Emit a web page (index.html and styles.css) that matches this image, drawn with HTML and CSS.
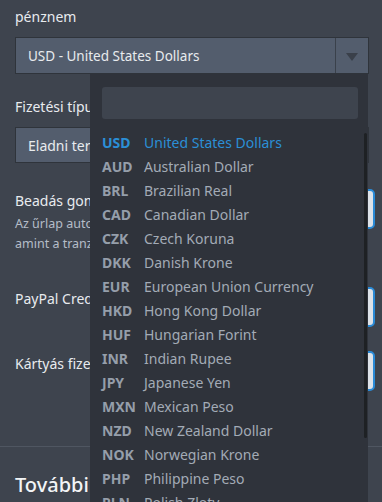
FILE: index.html
```html
<!DOCTYPE html>
<html lang="hu">
<head>
<meta charset="utf-8">
<title>Pénznem</title>
<link rel="stylesheet" href="styles.css">
</head>
<body>
<div class="page">
  <div class="label first">pénznem</div>
  <div class="select">
    <span class="select-text">USD - United States Dollars</span>
    <span class="select-arrow"><span class="tri"></span></span>
  </div>

  <div class="label second">Fizetési típus</div>
  <div class="box">Eladni termékeket</div>

  <div class="row r1">
    <div class="row-text">
      <div class="row-label">Beadás gomb szövege</div>
      <div class="row-desc">
        <span class="desc-line">Az űrlap automatikusan elküldésre kerül,</span>
        <span class="desc-line">amint a tranzakció befejeződött.</span>
      </div>
    </div>
    <div class="toggle"></div>
  </div>

  <div class="row r2">
    <div class="row-text">
      <div class="row-label">PayPal Credit</div>
    </div>
    <div class="toggle"></div>
  </div>

  <div class="row r3">
    <div class="row-text">
      <div class="row-label">Kártyás fizetés</div>
    </div>
    <div class="toggle"></div>
  </div>

  <hr class="sep">
  <h2 class="section-title">További beállítások</h2>
</div>

<div class="dropdown">
  <div class="search"></div>
  <ul class="list">
    <li class="opt selected"><span class="code">USD</span><span class="name">United States Dollars</span></li>
    <li class="opt"><span class="code">AUD</span><span class="name">Australian Dollar</span></li>
    <li class="opt"><span class="code">BRL</span><span class="name">Brazilian Real</span></li>
    <li class="opt"><span class="code">CAD</span><span class="name">Canadian Dollar</span></li>
    <li class="opt"><span class="code">CZK</span><span class="name">Czech Koruna</span></li>
    <li class="opt"><span class="code">DKK</span><span class="name">Danish Krone</span></li>
    <li class="opt"><span class="code">EUR</span><span class="name">European Union Currency</span></li>
    <li class="opt"><span class="code">HKD</span><span class="name">Hong Kong Dollar</span></li>
    <li class="opt"><span class="code">HUF</span><span class="name">Hungarian Forint</span></li>
    <li class="opt"><span class="code">INR</span><span class="name">Indian Rupee</span></li>
    <li class="opt"><span class="code">JPY</span><span class="name">Japanese Yen</span></li>
    <li class="opt"><span class="code">MXN</span><span class="name">Mexican Peso</span></li>
    <li class="opt"><span class="code">NZD</span><span class="name">New Zealand Dollar</span></li>
    <li class="opt"><span class="code">NOK</span><span class="name">Norwegian Krone</span></li>
    <li class="opt"><span class="code">PHP</span><span class="name">Philippine Peso</span></li>
    <li class="opt"><span class="code">PLN</span><span class="name">Polish Zloty</span></li>
  </ul>
  <div class="scrollbar"></div>
</div>
</body>
</html>
```
FILE: styles.css
```css
html, body {
  margin: 0;
  padding: 0;
  height: 100%;
  overflow: hidden;
}
body {
  background: #3e444e;
  font-family: "Noto Sans", "Open Sans", sans-serif;
  color: #e8ebee;
  font-size: 14px;
  position: relative;
}
.page {
  padding: 0 7px 0 15px;
}
.label {
  font-size: 14px;
  line-height: 20px;
  white-space: nowrap;
}
.label.first { padding-top: 7px; margin-bottom: 10px; }
.label.second { margin-top: 23px; margin-bottom: 10px; }
.select {
  width: 354px;
  height: 37px;
  box-sizing: border-box;
  background: #535d6d;
  border: 1px solid #2f343b;
  display: flex;
  align-items: center;
}
.select-text {
  flex: 1;
  padding-left: 12px;
  white-space: nowrap;
  font-size: 13.5px;
}
.select-arrow {
  width: 32px;
  height: 100%;
  border-left: 1px solid #3a414b;
  display: flex;
  align-items: center;
  justify-content: center;
}
.tri {
  width: 0;
  height: 0;
  border-left: 6px solid transparent;
  border-right: 6px solid transparent;
  border-top: 8px solid #3a404a;
  margin-top: 3px;
}
.box {
  width: 354px;
  height: 36px;
  box-sizing: border-box;
  background: #535d6d;
  border: 1px solid #2f343b;
  padding-left: 12px;
  display: flex;
  align-items: center;
  white-space: nowrap;
}
.row {
  display: flex;
  align-items: flex-start;
  justify-content: space-between;
}
.row-text { flex: 1; min-width: 0; }
.row-label {
  font-size: 14px;
  line-height: 20px;
  white-space: nowrap;
}
.row-desc {
  font-size: 12.5px;
  line-height: 20px;
  color: #b5bdc8;
  margin-top: 3px;
}
.desc-line {
  display: block;
  white-space: nowrap;
}
.toggle {
  width: 50px;
  height: 40px;
  box-sizing: border-box;
  border: 2px solid #2a8ad6;
  border-radius: 5px;
  background: #dde2e8;
  margin-top: -2px;
  flex: none;
}
.r1 { margin-top: 28px; }
.r2 { margin-top: 35px; }
.r3 { margin-top: 27px; }
.r3 .toggle { margin-top: -3px; }
.sep {
  border: 0;
  border-top: 1px solid #4f5661;
  margin: 55px -7px 0 -15px;
}
.section-title {
  margin: 24px 0 0 0;
  font-size: 20px;
  line-height: 28px;
  font-weight: 500;
  color: #f2f4f6;
  white-space: nowrap;
}
.dropdown {
  position: absolute;
  left: 90px;
  top: 74px;
  width: 278px;
  height: 440px;
  background: #2f333b;
  overflow: hidden;
}
.search {
  margin: 13px 10px 0 12px;
  height: 32px;
  background: #3e444e;
  border-radius: 3px;
}
.list {
  list-style: none;
  margin: 12px 0 0 0;
  padding: 0 0 0 12px;
}
.opt {
  height: 24px;
  line-height: 24px;
  display: flex;
  white-space: nowrap;
}
.code {
  width: 42px;
  font-weight: 700;
  color: #959eaa;
}
.name {
  color: #a3abb6;
}
.opt.selected .code,
.opt.selected .name {
  color: #2b8fd6;
}
.scrollbar {
  position: absolute;
  right: 1px;
  top: 59px;
  width: 3px;
  height: 305px;
  background: #1e2124;
  border-radius: 2px;
}
```
